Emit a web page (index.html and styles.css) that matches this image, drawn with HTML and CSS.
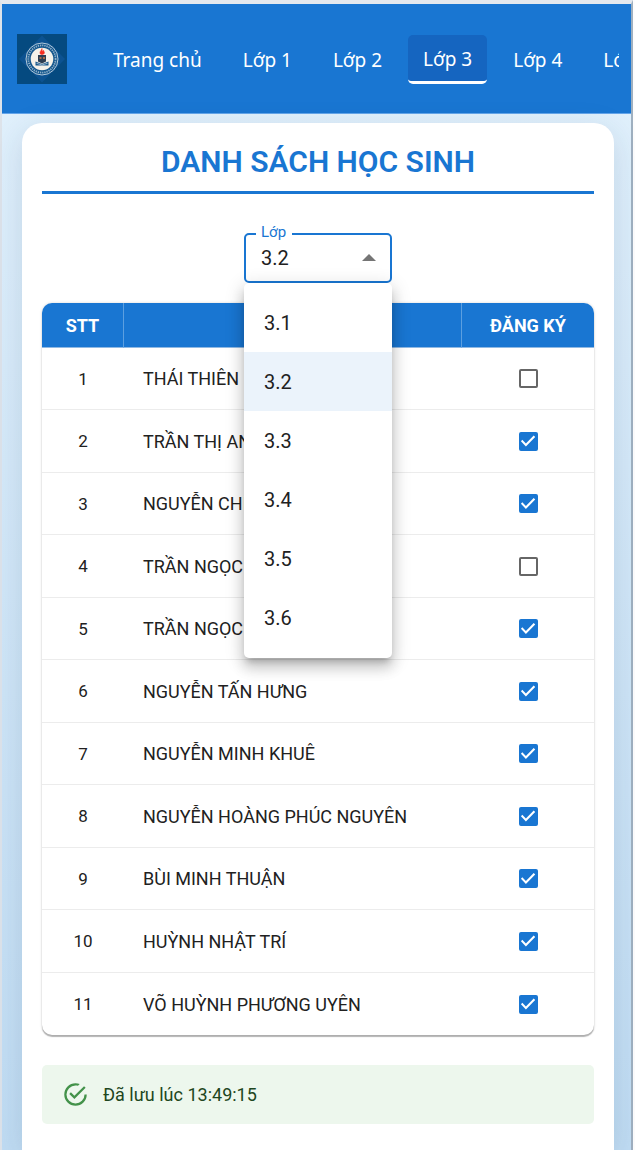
FILE: index.html
```html
<!DOCTYPE html>
<html lang="vi">
<head>
<meta charset="utf-8">
<meta name="viewport" content="width=device-width, initial-scale=1">
<title>Danh sách học sinh</title>
<link rel="stylesheet" href="styles.css">
</head>
<body>
<div class="page">
  <header class="navbar">
    <svg class="logo" viewBox="0 0 50 50" aria-hidden="true">
      <rect width="50" height="50" fill="#054a80"/>
      <path d="M25 1.500 48 25 25 48.500 2 25Z" fill="#0c5291"/>
      <circle cx="25" cy="25" r="16" fill="#12558c" stroke="#b4cadb" stroke-width="1"/>
      <circle cx="25" cy="25" r="13.600" fill="none" stroke="#8fb0ca" stroke-width="1.800" stroke-dasharray="1.300 .9"/>
      <circle cx="25" cy="25" r="11.300" fill="#f4f1e9"/>
      <path d="M25 14.500c-.3 2-2.500 2.800-2 4.700.3 1 1 1.300 2.200 1.300s2.300-.7 2.200-2c-.1-1-.8-1.200-.9-2.200-.5.400-.7.700-.8 1.200-.5-.8-.9-1.500-.7-3Z" fill="#f52d20" stroke="#f52d20" stroke-width=".6"/>
      <path d="M21 21h8v6.500l-4 2-4-2Z" fill="#2c3e52"/>
      <path d="M22.500 23h2v2h-2ZM26 23h2v2h-2Z" fill="#a66b48"/>
      <path d="M18.500 27.500 25 30 31.500 27.500V31.500H18.500Z" fill="#16578b"/>
      <path d="M19.500 29.300 25 31 30.500 29.300" fill="none" stroke="#e9eef2" stroke-width=".6"/>
    </svg>
    <nav class="nav">
      <a class="nav-link" href="#">Trang chủ</a>
      <a class="nav-link" href="#">Lớp 1</a>
      <a class="nav-link" href="#">Lớp 2</a>
      <a class="nav-link active" href="#" aria-current="page">Lớp 3</a>
      <a class="nav-link" href="#">Lớp 4</a>
      <a class="nav-link" href="#">Lớp 5</a>
    </nav>
  </header>
  <main class="card">
    <h1 class="title">DANH SÁCH HỌC SINH</h1>
    <div class="field">
      <label class="field-label" for="class-select">Lớp</label>
      <select class="field-select" id="class-select"><option selected>3.2</option></select>
      <svg class="field-arrow" viewBox="0 0 24 24" aria-hidden="true"><path d="m5 15 7-7 7 7z" fill="#757575"/></svg>
      <div class="menu" role="listbox" aria-label="Lớp">
        <button class="menu-item" type="button" role="option">3.1</button>
        <button class="menu-item selected" type="button" role="option" aria-selected="true">3.2</button>
        <button class="menu-item" type="button" role="option">3.3</button>
        <button class="menu-item" type="button" role="option">3.4</button>
        <button class="menu-item" type="button" role="option">3.5</button>
        <button class="menu-item" type="button" role="option">3.6</button>
      </div>
    </div>
    <div class="table-wrap">
      <table class="students">
        <thead>
          <tr><th class="col-num">STT</th><th>HỌ VÀ TÊN</th><th class="col-check">ĐĂNG KÝ</th></tr>
        </thead>
        <tbody>
          <tr><td>1</td><td class="name"><label for="s1">THÁI THIÊN BẢO</label></td><td><input class="tick" type="checkbox" id="s1"></td></tr>
          <tr><td>2</td><td class="name"><label for="s2">TRẦN THỊ AN</label></td><td><input class="tick" type="checkbox" id="s2" checked></td></tr>
          <tr><td>3</td><td class="name"><label for="s3">NGUYỄN CHÍ</label></td><td><input class="tick" type="checkbox" id="s3" checked></td></tr>
          <tr><td>4</td><td class="name"><label for="s4">TRẦN NGỌC</label></td><td><input class="tick" type="checkbox" id="s4"></td></tr>
          <tr><td>5</td><td class="name"><label for="s5">TRẦN NGỌC</label></td><td><input class="tick" type="checkbox" id="s5" checked></td></tr>
          <tr><td>6</td><td class="name"><label for="s6">NGUYỄN TẤN HƯNG</label></td><td><input class="tick" type="checkbox" id="s6" checked></td></tr>
          <tr><td>7</td><td class="name"><label for="s7">NGUYỄN MINH KHUÊ</label></td><td><input class="tick" type="checkbox" id="s7" checked></td></tr>
          <tr><td>8</td><td class="name"><label for="s8">NGUYỄN HOÀNG PHÚC NGUYÊN</label></td><td><input class="tick" type="checkbox" id="s8" checked></td></tr>
          <tr><td>9</td><td class="name"><label for="s9">BÙI MINH THUẬN</label></td><td><input class="tick" type="checkbox" id="s9" checked></td></tr>
          <tr><td>10</td><td class="name"><label for="s10">HUỲNH NHẬT TRÍ</label></td><td><input class="tick" type="checkbox" id="s10" checked></td></tr>
          <tr><td>11</td><td class="name"><label for="s11">VÕ HUỲNH PHƯƠNG UYÊN</label></td><td><input class="tick" type="checkbox" id="s11" checked></td></tr>
        </tbody>
      </table>
    </div>
    <div class="alert" role="status">
      <svg class="alert-icon" viewBox="0 0 24 24" aria-hidden="true"><path fill="#43924a" d="M20,12A8,8 0 0,1 12,20A8,8 0 0,1 4,12A8,8 0 0,1 12,4C12.760,4 13.500,4.110 14.200,4.310L15.770,2.740C14.610,2.260 13.340,2 12,2A10,10 0 0,0 2,12A10,10 0 0,0 12,22A10,10 0 0,0 22,12M7.910,10.080L6.500,11.500L11,16L21,6L19.590,4.580L11,13.170L7.910,10.080Z"/></svg>
      <span>Đã lưu lúc 13:49:15</span>
    </div>
  </main>
</div>
</body>
</html>
```
FILE: styles.css
```css
* { box-sizing: border-box; }

html { background: #fdfdfd; }

body {
  margin: 0;
  font-family: Roboto, "Liberation Sans", sans-serif;
  color: #212121;
  overflow: hidden;
}

.page {
  min-height: 100vh;
  margin-right: 2px;
  border-top: 4px solid #e4e8ee;
  border-left: 2px solid #dde3ea;
  border-right: 2px solid #9fb0c0;
  background: linear-gradient(#e3f2fd, #c0dcf3);
}

.navbar {
  display: flex;
  align-items: center;
  gap: 31px;
  height: 110px;
  padding: 0 12px 0 15px;
  border-bottom: 1px solid #64a5ea;
  background: #1976d2;
}

.logo {
  width: 50px;
  height: 50px;
  flex: none;
}

.nav {
  display: flex;
  align-items: center;
  gap: 11px;
  min-width: 0;
  flex: 1;
  padding-top: 2px;
  overflow: hidden;
}

.nav-link {
  flex: none;
  padding: 10px 15px;
  border-radius: 5px;
  font-family: "Noto Sans", "Open Sans", sans-serif;
  font-size: 19px;
  line-height: 28px;
  color: #fff;
  text-decoration: none;
}

.nav-link.active {
  padding-bottom: 8px;
  border-bottom: 3px solid #fff;
  background: #1565c0;
}

.card {
  margin: 9px 17px 0 20px;
  min-height: calc(100vh - 123px);
  padding: 20px;
  border-radius: 20px 20px 0 0;
  background: #fff;
  box-shadow: 0 8px 32px rgba(31, 60, 90, 0.14);
}

.title {
  margin: 0 0 39px;
  padding-bottom: 10px;
  border-bottom: 3px solid #1976d2;
  font-size: 30px;
  font-weight: 600;
  line-height: 38px;
  text-align: center;
  color: #1976d2;
}

.field {
  position: relative;
  width: 148px;
  height: 50px;
  margin: 0 auto 20px;
}

.field-label {
  position: absolute;
  top: -10px;
  left: 12px;
  padding: 0 6px 0 5px;
  background: #fff;
  font-size: 15px;
  line-height: 18px;
  color: #1976d2;
}

.field-select {
  appearance: none;
  width: 100%;
  height: 100%;
  padding: 0 15px;
  border: 2px solid #1976d2;
  border-radius: 5px;
  background: #fff;
  font-family: inherit;
  font-size: 20px;
  color: #212121;
  outline: none;
}

.field-arrow {
  position: absolute;
  top: 12px;
  right: 11px;
  width: 24px;
  height: 26px;
  pointer-events: none;
}

.menu {
  position: absolute;
  z-index: 2;
  top: 100%;
  left: 0;
  width: 100%;
  padding: 10px 0 11px;
  border-radius: 5px;
  background: #fff;
  box-shadow: 0 6px 6px -3px rgba(0, 0, 0, 0.2), 0 10px 13px 1px rgba(0, 0, 0, 0.14), 0 4px 18px 3px rgba(0, 0, 0, 0.12);
}

.menu-item {
  display: block;
  width: 100%;
  height: 59px;
  padding: 0 20px;
  border: 0;
  background: none;
  font-family: inherit;
  font-size: 20px;
  text-align: left;
  color: #212121;
}

.menu-item.selected { background: #ebf3fb; }

.table-wrap {
  overflow: hidden;
  border-radius: 10px;
  box-shadow: 0 2px 1px rgba(0, 0, 0, 0.28), 0 0 3px rgba(0, 0, 0, 0.16);
}

.students {
  width: 100%;
  border-collapse: separate;
  border-spacing: 0;
  font-size: 17px;
}

.students th {
  height: 45px;
  padding: 0;
  border-right: 1px solid #5c9fe0;
  border-bottom: 1px solid #90b9e3;
  background: #1976d2;
  font-size: 18px;
  font-weight: 700;
  color: #fff;
}

.students th:last-child { border-right: 0; }

.students .col-num { width: 82px; }

.students .col-check { width: 132px; }

.students td {
  height: 62px;
  padding: 0;
  border-bottom: 1px solid #ececec;
  text-align: center;
}

.students tr:nth-child(even) td { height: 63px; }

.students tr:last-child td { border-bottom: 0; }

.students td.name {
  padding: 0 19px;
  font-size: 18px;
  text-align: left;
}

.tick {
  appearance: none;
  display: block;
  width: 19px;
  height: 19px;
  margin: 0 auto;
  border: 2px solid #666;
  border-radius: 2px;
  background: #fff;
}

.tick:checked {
  border-color: #1976d2;
  background: #1976d2;
}

.tick:checked::after {
  content: "";
  display: block;
  height: 100%;
  background: #fff;
  clip-path: polygon(3% 51%, 12% 42%, 36% 66%, 88% 14%, 98% 24%, 36% 86%);
}

.alert {
  display: flex;
  align-items: center;
  gap: 14px;
  margin-top: 30px;
  padding: 16px 20px;
  border-radius: 5px;
  background: #edf7ed;
  font-size: 18px;
  line-height: 27px;
  color: #1e4620;
}

.alert-icon {
  width: 27px;
  height: 27px;
}
```
